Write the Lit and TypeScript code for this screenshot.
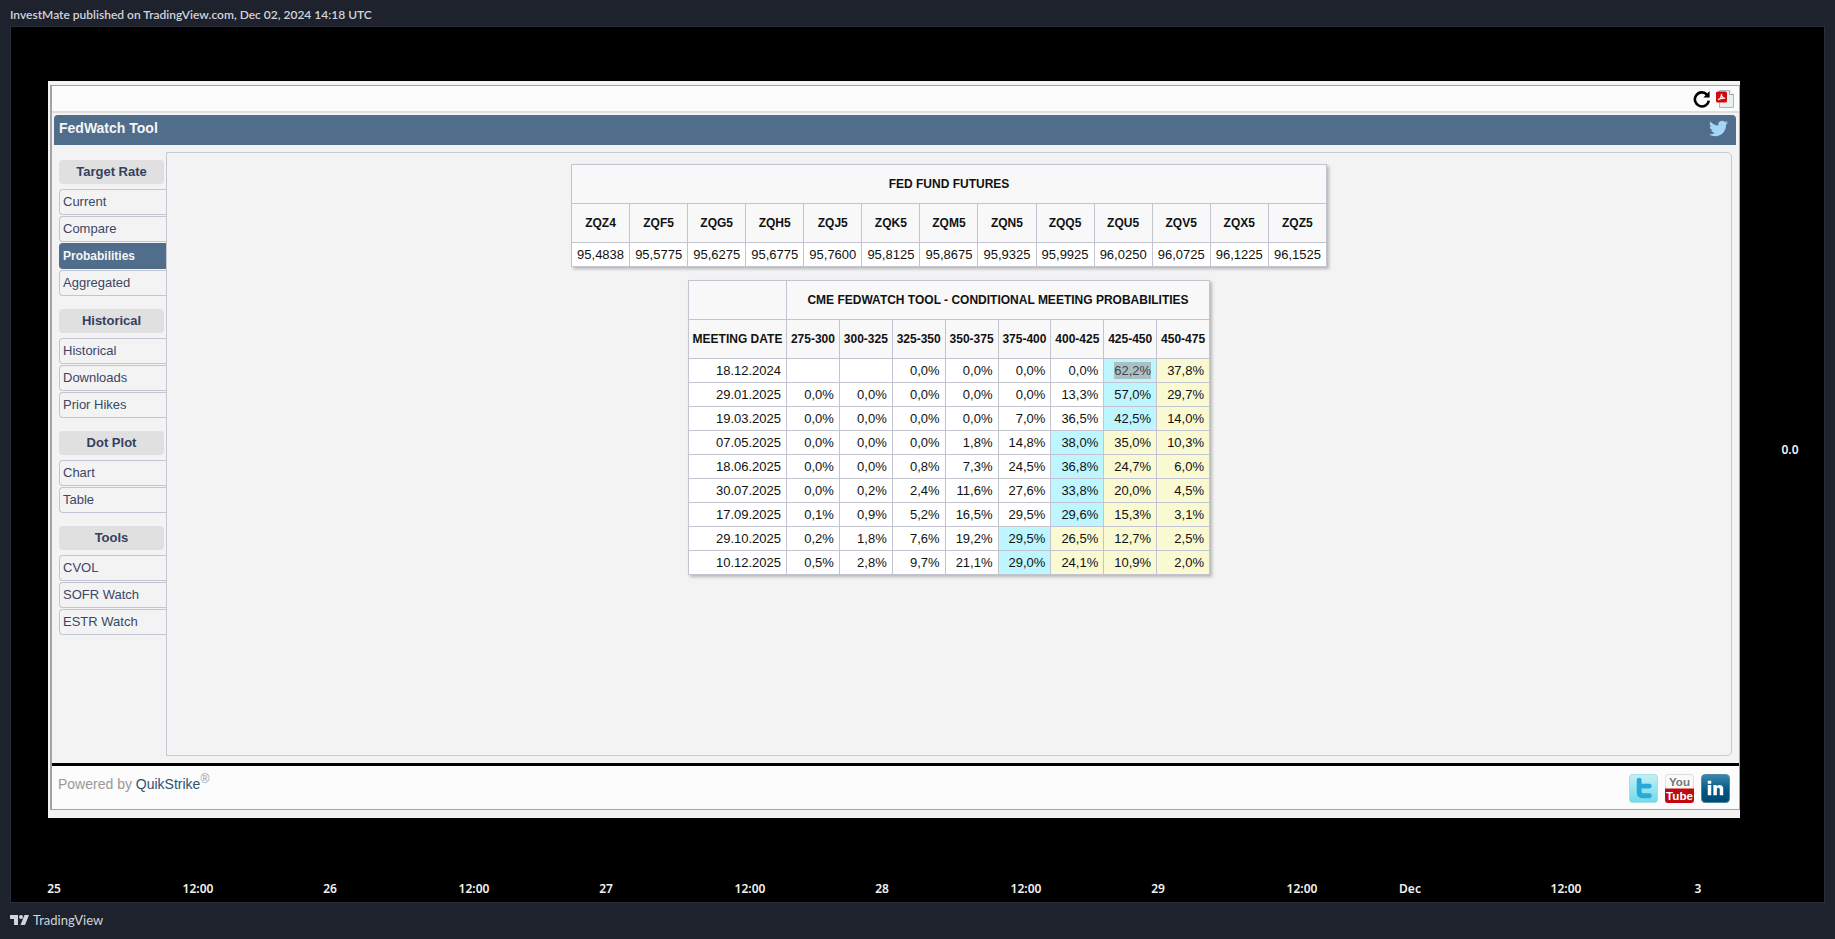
import { LitElement, html, css } from "lit";
import { customElement } from "lit/decorators.js";
import { classMap } from "lit/directives/class-map.js";

const MENU = [
  { title: "Target Rate", items: ["Current", "Compare", "Probabilities", "Aggregated"] },
  { title: "Historical", items: ["Historical", "Downloads", "Prior Hikes"] },
  { title: "Dot Plot", items: ["Chart", "Table"] },
  { title: "Tools", items: ["CVOL", "SOFR Watch", "ESTR Watch"] },
];

const FUTURES: [string, string][] = [
  ["ZQZ4", "95,4838"], ["ZQF5", "95,5775"], ["ZQG5", "95,6275"], ["ZQH5", "95,6775"],
  ["ZQJ5", "95,7600"], ["ZQK5", "95,8125"], ["ZQM5", "95,8675"], ["ZQN5", "95,9325"],
  ["ZQQ5", "95,9925"], ["ZQU5", "96,0250"], ["ZQV5", "96,0725"], ["ZQX5", "96,1225"],
  ["ZQZ5", "96,1525"],
];

const RANGES = ["275-300", "300-325", "325-350", "350-375", "375-400", "400-425", "425-450", "450-475"];

// peak: column with the highest probability; the columns after it are shaded yellow
const MEETINGS = [
  { date: "18.12.2024", peak: 6, odds: ["", "", "0,0%", "0,0%", "0,0%", "0,0%", "62,2%", "37,8%"] },
  { date: "29.01.2025", peak: 6, odds: ["0,0%", "0,0%", "0,0%", "0,0%", "0,0%", "13,3%", "57,0%", "29,7%"] },
  { date: "19.03.2025", peak: 6, odds: ["0,0%", "0,0%", "0,0%", "0,0%", "7,0%", "36,5%", "42,5%", "14,0%"] },
  { date: "07.05.2025", peak: 5, odds: ["0,0%", "0,0%", "0,0%", "1,8%", "14,8%", "38,0%", "35,0%", "10,3%"] },
  { date: "18.06.2025", peak: 5, odds: ["0,0%", "0,0%", "0,8%", "7,3%", "24,5%", "36,8%", "24,7%", "6,0%"] },
  { date: "30.07.2025", peak: 5, odds: ["0,0%", "0,2%", "2,4%", "11,6%", "27,6%", "33,8%", "20,0%", "4,5%"] },
  { date: "17.09.2025", peak: 5, odds: ["0,1%", "0,9%", "5,2%", "16,5%", "29,5%", "29,6%", "15,3%", "3,1%"] },
  { date: "29.10.2025", peak: 4, odds: ["0,2%", "1,8%", "7,6%", "19,2%", "29,5%", "26,5%", "12,7%", "2,5%"] },
  { date: "10.12.2025", peak: 4, odds: ["0,5%", "2,8%", "9,7%", "21,1%", "29,0%", "24,1%", "10,9%", "2,0%"] },
];

// label and number of hourly bars until the next label
const TICKS: [string, number][] = [
  ["25", 12], ["12:00", 11], ["26", 12], ["12:00", 11], ["27", 12], ["12:00", 11], ["28", 12],
  ["12:00", 11], ["29", 12], ["12:00", 9], ["Dec", 13], ["12:00", 11], ["3", 3],
];

const BIRD = "M23.95 4.57a10 10 0 0 1-2.82.77 4.96 4.96 0 0 0 2.16-2.72c-.95.56-2 .96-3.13 1.18a4.92 4.92 0 0 0-8.38 4.48C7.69 8.09 4.07 6.13 1.64 3.16a4.82 4.82 0 0 0-.67 2.48c0 1.7.87 3.2 2.19 4.1a4.9 4.9 0 0 1-2.23-.62v.06a4.92 4.92 0 0 0 3.95 4.83 5 5 0 0 1-2.21.08 4.94 4.94 0 0 0 4.6 3.42A9.87 9.87 0 0 1 0 19.54a14 14 0 0 0 7.56 2.21c9.05 0 14-7.5 14-13.98 0-.21 0-.42-.02-.63a9.94 9.94 0 0 0 2.46-2.55z";

@customElement("fed-watch")
export class FedWatch extends LitElement {
  static styles = css`
    :host {
      display: flex;
      flex-direction: column;
      background: #f3f3f3;
      padding: 4px 0 8px 2px;
      font-family: "Liberation Sans", Arial, sans-serif;
      font-weight: 400;
      color: #333;
    }
    .frame {
      flex: 1;
      display: flex;
      flex-direction: column;
      border: solid #a3a3a3;
      border-width: 1px 1px 1px 2px;
    }
    .toolbar {
      display: flex;
      justify-content: flex-end;
      align-items: center;
      gap: 5px;
      height: 25px;
      padding-right: 4px;
      background: #fcfcfc;
      border-bottom: 2px solid #dedede;
    }
    button {
      display: block;
      border: 0;
      padding: 0;
      background: none;
    }
    svg { display: block; }
    .title {
      display: flex;
      justify-content: space-between;
      align-items: center;
      margin: 2px 3px 0 2px;
      padding: 0 8px 4px 5px;
      height: 26px;
      background: #506d8b;
      border-radius: 4px 4px 0 0;
    }
    h1 {
      margin: 0;
      font-size: 14px;
      line-height: 18px;
      color: #f4f6f8;
    }
    .body {
      flex: 1;
      display: flex;
      padding: 7px;
    }
    nav {
      width: 107px;
      padding-top: 8px;
    }
    .group { margin-bottom: 13px; }
    h2 {
      margin: 0 2px 5px 0;
      font-size: 13px;
      line-height: 24px;
      text-align: center;
      color: #35405f;
      background: #e0e0e0;
      border-radius: 4px;
    }
    .items {
      display: flex;
      flex-direction: column;
      gap: 1px;
    }
    .item {
      border: 1px solid #c3c6d2;
      border-right: 0;
      border-radius: 4px 0 0 4px;
      padding-left: 3px;
      font-size: 13px;
      line-height: 24px;
      color: #3c4665;
      text-decoration: none;
    }
    .item.active {
      margin-right: -1px;
      background: #506d8b;
      border-color: #506d8b;
      color: #f4f6f8;
      font-size: 12px;
      font-weight: bold;
    }
    .content {
      flex: 1;
      display: flex;
      flex-direction: column;
      align-items: center;
      gap: 13px;
      padding: 11px 0;
      border: 1px solid #c6c8d3;
      border-radius: 0 5px 5px 0;
    }
    table {
      border-collapse: collapse;
      table-layout: fixed;
      background: #fff;
      box-shadow: 2px 2px 3px rgba(0, 0, 0, 0.25);
      font-size: 13px;
      color: #111;
    }
    .futures { width: 756px; }
    .odds { width: 522px; }
    .date-col { width: 98px; }
    th, td {
      border: 1px solid #c3c4d0;
      padding: 0;
      white-space: nowrap;
    }
    th {
      height: 38px;
      background: #f8f8f8;
      font-size: 12px;
    }
    td {
      height: 23px;
      padding-right: 5px;
      text-align: right;
    }
    .peak { background: #bdf6ff; }
    .above { background: #f9f9d2; }
    .marked {
      padding: 1px 0;
      background: #a9c0c5;
      color: #444;
    }
    footer {
      display: flex;
      justify-content: space-between;
      align-items: flex-start;
      height: 33px;
      padding: 8px 9px 2px 6px;
      border-top: 3px solid #000;
      background: #fcfcfc;
      font-size: 14px;
      line-height: 20px;
      color: #999;
    }
    footer sup {
      font-size: 12px;
      line-height: 0;
    }
    footer a { color: #2f5270; text-decoration: none; }
    .social { display: flex; gap: 7px; }
  `;

  private shade(i: number, peak: number) {
    return classMap({ peak: i === peak, above: i > peak });
  }

  render() {
    return html`
      <div class="frame">
        <div class="toolbar">
          <button aria-label="Reload">
            <svg width="18" height="18" viewBox="0 0 18 18">
              <path d="M14 4.6A7 7 0 1 0 15.8 10.6" fill="none" stroke="#000" stroke-width="2.6" />
              <path d="M16.6 1v6.4h-6.2z" />
            </svg>
          </button>
          <button aria-label="Export to PDF">
            <svg width="19" height="20" viewBox="0 0 19 20">
              <path d="M3.5 1.5h10l4 4v13h-14z" fill="#e9efef" stroke="#a9b8b8" />
              <path d="M13.5 1.5v4h4" fill="#fff" stroke="#8fa3a3" />
              <rect x="0" y="2.5" width="11" height="11" rx="1.5" fill="#d00a10" />
              <path d="M2 10.8c2-.8 3.600-3 3.400-5.800.3 2.600 1.600 4 3.800 4.200-2.400-.3-4.900.1-7.200 1.600z" fill="none" stroke="#fff" stroke-width="1.1" />
            </svg>
          </button>
        </div>
        <header class="title">
          <h1>FedWatch Tool</h1>
          <button aria-label="Share on Twitter">
            <svg width="19" height="19" viewBox="0 0 24 24"><path d=${BIRD} fill="#a5d5f8" /></svg>
          </button>
        </header>
        <div class="body">
          <nav>
            ${MENU.map((g) => html`
              <div class="group">
                <h2>${g.title}</h2>
                <div class="items">
                  ${g.items.map((t) => html`
                    <a href="#" class=${classMap({ item: true, active: t === "Probabilities" })}>${t}</a>`)}
                </div>
              </div>`)}
          </nav>
          <main class="content">
            <table class="futures">
              <thead>
                <tr><th colspan="13">FED FUND FUTURES</th></tr>
                <tr>${FUTURES.map(([code]) => html`<th>${code}</th>`)}</tr>
              </thead>
              <tbody>
                <tr>${FUTURES.map(([, price]) => html`<td>${price}</td>`)}</tr>
              </tbody>
            </table>
            <table class="odds">
              <colgroup><col class="date-col" /><col span="8" /></colgroup>
              <thead>
                <tr><th></th><th colspan="8">CME FEDWATCH TOOL - CONDITIONAL MEETING PROBABILITIES</th></tr>
                <tr><th>MEETING DATE</th>${RANGES.map((r) => html`<th>${r}</th>`)}</tr>
              </thead>
              <tbody>
                ${MEETINGS.map((m, row) => html`
                  <tr>
                    <td>${m.date}</td>
                    ${m.odds.map((v, i) => html`<td class=${this.shade(i, m.peak)}>${row === 0 && i === m.peak
                      ? html`<span class="marked">${v}</span>` : v}</td>`)}
                  </tr>`)}
              </tbody>
            </table>
          </main>
        </div>
        <footer>
          <span>Powered by <a href="#">QuikStrike</a><sup>®</sup></span>
          <div class="social">
            <a href="#" aria-label="Twitter">
              <svg width="29" height="29" viewBox="0 0 30 30">
                <defs><linearGradient id="tw" x2="0" y2="1"><stop stop-color="#c4f0f4" /><stop offset="1" stop-color="#6fd9e8" /></linearGradient></defs>
                <rect x=".5" y=".5" width="29" height="29" rx="3" fill="url(#tw)" stroke="#a5dfe8" />
                <path d="M10.5 6.5v12q0 4 4 4h6.5M10.5 12.5h10.5" fill="none" stroke="#27a9dc" stroke-width="5" stroke-linecap="round" stroke-linejoin="round" />
              </svg>
            </a>
            <a href="#" aria-label="YouTube">
              <svg width="29" height="29" viewBox="0 0 30 30">
                <rect x=".5" y=".5" width="29" height="29" rx="3" fill="#fafafa" stroke="#dcdcdc" />
                <path d="M0 15h30v12q0 3-3 3H3q-3 0-3-3z" fill="#c00a10" />
                <g font-family="Liberation Sans Narrow, Liberation Sans" font-weight="700" font-size="12" text-anchor="middle">
                  <text x="15" y="12" fill="#777">You</text>
                  <text x="15" y="27" fill="#fff">Tube</text>
                </g>
              </svg>
            </a>
            <a href="#" aria-label="LinkedIn">
              <svg width="29" height="29" viewBox="0 0 30 30">
                <defs><linearGradient id="li" x2="0" y2="1"><stop stop-color="#3a89b0" /><stop offset=".6" stop-color="#00557f" /><stop offset="1" stop-color="#004a70" /></linearGradient></defs>
                <rect x=".5" y=".5" width="29" height="29" rx="4" fill="url(#li)" stroke="#4c87a5" />
                <path d="M7 11.5h3.6V22H7zM7 7h3.6v3H7zM12.8 11.5h3.4v1.4c1.8-2.6 6.8-2.1 6.8 2.1v7h-3.6v-6c0-2.6-3-2.3-3 0v6h-3.6z" fill="#fff" />
              </svg>
            </a>
          </div>
        </footer>
      </div>
    `;
  }
}

@customElement("app-root")
export class AppRoot extends LitElement {
  static styles = css`
    :host {
      display: flex;
      flex-direction: column;
      box-sizing: border-box;
      min-height: 100vh;
      padding: 0 10px;
      background: #1e222d;
      font-family: "Trebuchet MS", Lato, sans-serif;
      font-size: 12px;
      color: #d1d4dc;
    }
    .byline {
      padding-top: 6px;
      height: 20px;
      line-height: 18px;
      font-weight: 600;
    }
    .chart {
      flex: 1;
      display: grid;
      grid-template-columns: 1fr 84px;
      grid-template-rows: 1fr 84px;
      border: 1px solid #2a2e39;
      background: #000;
      color: #f2f2f2;
      font-family: "Trebuchet MS", "Noto Sans", sans-serif;
      font-weight: 600;
    }
    .plot {
      display: grid;
      padding: 54px 0 0 37px;
    }
    .price {
      display: flex;
      align-items: center;
      justify-content: center;
      padding: 54px 0 0 16px;
    }
    .times {
      display: flex;
      padding: 63px 6px 0 43px;
      line-height: 16px;
    }
    .tick {
      display: flex;
      justify-content: center;
      width: 0;
    }
    .brand {
      display: flex;
      align-items: center;
      gap: 4px;
      height: 34px;
      padding-bottom: 2px;
      font-size: 13px;
    }
  `;

  render() {
    return html`
      <div class="byline">InvestMate published on TradingView.com, Dec 02, 2024 14:18 UTC</div>
      <section class="chart">
        <div class="plot"><fed-watch></fed-watch></div>
        <div class="price">0.0</div>
        <div class="times">
          ${TICKS.map(([label, bars]) => html`
            <div style="flex: ${bars} 1 0"><span class="tick">${label}</span></div>`)}
        </div>
      </section>
      <div class="brand">
        <svg width="19" height="10" viewBox="0 0 19 10" fill="#d1d4dc" aria-hidden="true">
          <path d="M0 0h8v10H4V4H0z" /><circle cx="11" cy="2" r="2" /><path d="M14.5 0H19l-4 10h-4.5z" />
        </svg>
        TradingView
      </div>
    `;
  }
}
